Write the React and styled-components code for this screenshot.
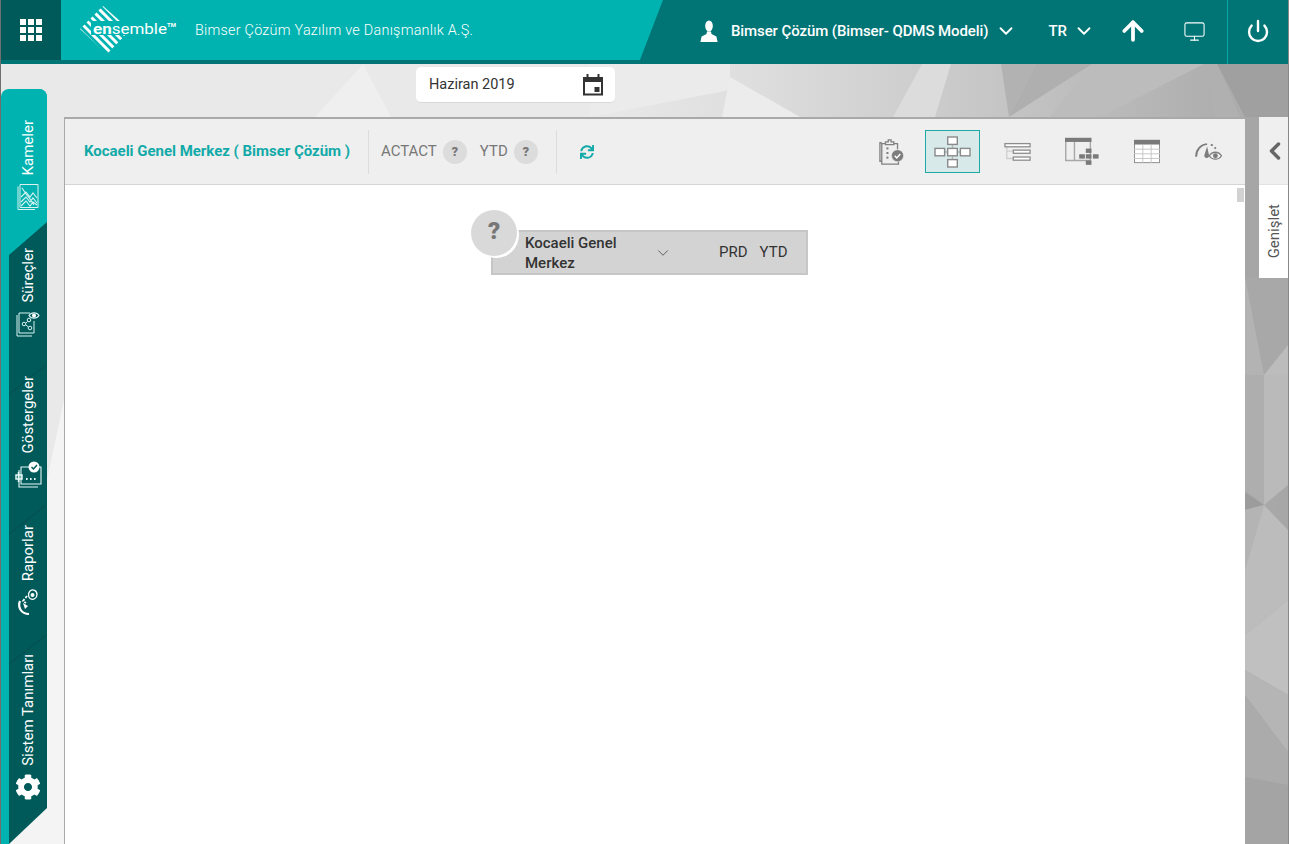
import React from 'react'
import styled, { createGlobalStyle } from 'styled-components'
import { ArrowUp, ChevronDown, ChevronLeft, Monitor, Power } from 'lucide-react'
import { FaCog, FaSync } from 'react-icons/fa'

const TEAL = '#00b3b0'
const DARK_TEAL = '#017575'
const DEEP_TEAL = '#005a5a'

const GlobalStyle = createGlobalStyle`
  html, body {
    margin: 0;
    background: #fff;
    font-family: Roboto, "Liberation Sans", sans-serif;
    overflow: hidden;
  }
`

const Frame = styled.div`
  position: relative;
  box-sizing: border-box;
  width: 1289px;
  height: 844px;
  border-left: 1px solid #6f6f6f;
  border-right: 1px solid #8a8a8a;
  display: flex;
  flex-direction: column;
  overflow: hidden;
`

const Backdrop = styled.svg`
  position: absolute;
  left: -1px;
  top: 0;
  width: 1290px;
  height: 844px;
`

const Header = styled.header`
  position: relative;
  flex: 0 0 64px;
  display: flex;
  background: ${DARK_TEAL};
  color: #fff;
`

const GridButton = styled.div`
  width: 60px;
  height: 60px;
  background: ${DEEP_TEAL};
  display: flex;
  align-items: center;
  justify-content: center;
`

const Brand = styled.div`
  width: 603px;
  height: 60px;
  background: ${TEAL};
  clip-path: polygon(0 0, 100% 0, calc(100% - 23px) 100%, 0 100%);
  display: flex;
  align-items: center;
  padding-left: 19px;
  box-sizing: border-box;
`

const CompanyName = styled.span`
  margin-left: 17px;
  font-size: 14.4px;
  font-weight: 300;
  letter-spacing: 0.25px;
  color: #fff;
  padding-top: 1px;
`

const HeaderRight = styled.div`
  display: flex;
  align-items: center;
  flex: 1;
  padding: 0 0 2px 37px;
  height: 64px;
  box-sizing: border-box;
`

const UserName = styled.span`
  margin-left: 13px;
  font-size: 15px;
  font-weight: 500;
  letter-spacing: -0.09px;
  white-space: nowrap;
`

const Lang = styled.span`
  margin-left: 31px;
  font-size: 15px;
  font-weight: 500;
`

const Glyph = styled.span`
  display: flex;
  margin-left: ${p => p.$left}px;
`

const PowerCell = styled.div`
  margin: 0 0 -2px 21px;
  align-self: stretch;
  width: 61px;
  border-left: 1px solid #0aa5a2;
  display: flex;
  align-items: center;
  justify-content: center;
  padding-bottom: 2px;
  box-sizing: border-box;
`

const Body = styled.div`
  position: relative;
  flex: 1;
  display: flex;
  min-height: 0;
`

const Sidebar = styled.nav`
  flex: 0 0 46px;
  margin-top: 25px;
  box-sizing: border-box;
  padding-left: 8px;
  border-radius: 8px 8px 0 0;
  overflow: hidden;
  background:
    linear-gradient(90deg, ${TEAL} 8px, transparent 8px),
    linear-gradient(${TEAL}, ${TEAL}) no-repeat top / 100% 166px;
`

const Tab = styled.a`
  position: relative;
  box-sizing: border-box;
  height: ${p => p.$height}px;
  padding-top: ${p => p.$top}px;
  display: flex;
  flex-direction: column;
  align-items: center;
  gap: 8px;
  color: #fff;
  background: ${p => (p.$active ? TEAL : DEEP_TEAL)};
  clip-path: ${p => p.$shape || 'none'};

  &::before {
    content: '';
    display: ${p => (p.$seam ? 'block' : 'none')};
    position: absolute;
    left: 0;
    top: 0;
    width: 100%;
    height: 30px;
    background: linear-gradient(to bottom right, transparent calc(50% - 2px), #034d4d 50%, transparent 50%);
  }
`

const TabLabel = styled.span`
  position: relative;
  writing-mode: vertical-rl;
  transform: rotate(180deg);
  font-size: 15px;
  line-height: 16px;
  white-space: nowrap;
`

const Center = styled.div`
  position: relative;
  flex: 0 0 1181px;
  margin-left: 17px;
  display: flex;
  flex-direction: column;
  min-height: 0;
`

const DatePicker = styled.div`
  box-sizing: border-box;
  margin: 3px 0 14px 352px;
  width: 199px;
  height: 36px;
  border-radius: 5px;
  background: #fff;
  border-bottom: 1px solid #d8d8d8;
  padding: 0 11px 0 13px;
  display: flex;
  align-items: center;
  justify-content: space-between;
  font-size: 14.5px;
  color: #333;
`

const Panel = styled.section`
  position: relative;
  flex: 1;
  display: flex;
  flex-direction: column;
  box-sizing: border-box;
  border-top: 2px solid #a9a9a9;
  border-left: 1px solid #a9a9a9;
  background: #fff;
  min-height: 0;
`

const Toolbar = styled.div`
  flex: 0 0 66px;
  box-sizing: border-box;
  display: flex;
  align-items: center;
  background: #efefef;
  border-bottom: 1px solid #d4d4d4;
  padding-left: 19px;
`

const Title = styled.h1`
  margin: 0;
  padding-bottom: 2px;
  font-size: 15px;
  font-weight: 700;
  letter-spacing: -0.02px;
  color: #12aaa8;
  white-space: nowrap;
`

const Divider = styled.span`
  width: 1px;
  height: 44px;
  background: #dcdcdc;
  margin: 0 ${p => p.$right}px 0 ${p => p.$left}px;
`

const Metric = styled.span`
  padding-bottom: 2px;
  font-size: 15px;
  color: #777;
  margin-right: 6px;
`

const HelpDot = styled.span`
  width: 24px;
  height: 24px;
  border-radius: 50%;
  background: #dcdcdc;
  color: #777;
  font-size: 13px;
  font-weight: 900;
  display: flex;
  align-items: center;
  justify-content: center;
  margin-right: ${p => p.$right || 0}px;
`

const Refresh = styled(FaSync)`
  margin-left: 23px;
  width: 14px;
  height: 14px;
  color: #12aaa8;
`

const ViewButtons = styled.div`
  margin-left: auto;
  display: flex;
  align-items: center;
  padding-right: 22px;
`

const ViewButton = styled.button`
  box-sizing: border-box;
  width: ${p => p.$width}px;
  height: 43px;
  margin-left: ${p => p.$gap}px;
  padding: 0;
  display: flex;
  align-items: center;
  justify-content: center;
  background: ${p => (p.$active ? '#d7e9e9' : 'transparent')};
  border: 1px solid ${p => (p.$active ? '#1fa9a5' : 'transparent')};
`

const Canvas = styled.div`
  position: relative;
  flex: 1;
  background: #fff;
`

const ScrollThumb = styled.div`
  position: absolute;
  right: 1px;
  top: 3px;
  width: 7px;
  height: 14px;
  background: #d2d2d2;
`

const Node = styled.div`
  position: absolute;
  left: 426px;
  top: 45px;
  box-sizing: border-box;
  width: 317px;
  height: 45px;
  background: #d3d3d3;
  border: 2px solid #c6c6c6;
  display: flex;
  align-items: center;
  font-size: 15px;
  color: #333;
`

const NodeName = styled.div`
  width: 129px;
  margin-left: 32px;
  font-weight: 500;
  line-height: 20px;
`

const NodeChevron = styled(ChevronDown)`
  color: #555;
`

const NodeTag = styled.span`
  margin-left: ${p => p.$left}px;
  padding-bottom: 2px;
  font-weight: 400;
`

const NodeBadge = styled.div`
  position: absolute;
  left: 406px;
  top: 25px;
  width: 46px;
  height: 46px;
  border-radius: 50%;
  background: #d9d9d9;
  box-shadow: 2px 2px 0 #fff;
  color: #777;
  font-size: 24px;
  font-weight: 900;
  display: flex;
  align-items: center;
  justify-content: center;
  padding-bottom: 4px;
  box-sizing: border-box;
`

const Expander = styled.aside`
  flex: 0 0 29px;
  margin: 53px 0 0 14px;
  height: 161px;
  display: flex;
  flex-direction: column;
`

const ExpandTop = styled.div`
  flex: 0 0 67px;
  background: #efefef;
  display: flex;
  align-items: center;
  justify-content: center;
  padding-left: 2px;
  box-sizing: border-box;
  color: #666;
`

const ExpandLabel = styled.div`
  flex: 1;
  background: #fff;
  border-top: 1px solid #e3e3e3;
  display: flex;
  justify-content: center;
  align-items: center;
`

const ExpandText = styled.span`
  writing-mode: vertical-rl;
  transform: rotate(180deg);
  font-size: 15px;
  line-height: 16px;
  color: #555;
`

const AppsIcon = () => (
  <svg width="22" height="22" viewBox="0 0 22 22" fill="#fff">
    {[0, 8, 16].map(y => [0, 8, 16].map(x => <rect key={`${x}-${y}`} x={x} y={y} width="6" height="6" />))}
  </svg>
)

const stripes = [-48, -40, -32, -24, -16, -8, 0, 8, 16, 24, 32, 40, 48]

const Logo = () => (
  <svg width="98" height="50" viewBox="0 0 98 50">
    <defs>
      <clipPath id="diamond">
        <polygon points="0,24 23,1 50,25 27,49" />
      </clipPath>
    </defs>
    <g clipPath="url(#diamond)" stroke="#fff" strokeWidth="3">
      {stripes.map(o => (
        <line key={o} x1={o - 30} y1={-5} x2={o + 60} y2={85} />
      ))}
    </g>
    <rect x="11" y="16" width="87" height="14" fill={TEAL} />
    <text x="13" y="28.5" fontFamily="Roboto, sans-serif" fontSize="15" fill="#fff" textLength="74" lengthAdjust="spacingAndGlyphs">
      <tspan fontWeight="700">en</tspan>
      <tspan fontWeight="400">semble</tspan>
    </text>
    <text x="87" y="22" fontFamily="Roboto, sans-serif" fontSize="6" fontWeight="700" fill="#fff">TM</text>
  </svg>
)

const UserIcon = () => (
  <svg width="18" height="22" viewBox="0 0 18 22" fill="#fff">
    <ellipse cx="9" cy="6" rx="3.8" ry="5.6" />
    <path d="M7 11.5 L11 11.5 L11.5 14 L16.4 16.5 L17.6 22 L.4 22 L1.6 16.5 L6.5 14 Z" />
  </svg>
)

const CalendarIcon = () => (
  <svg width="22" height="22" viewBox="0 0 22 22" fill="#333">
    <path d="M1 3h20v18.5H1z M3 8v11.5h16V8z" fillRule="evenodd" />
    <rect x="4.5" y="0" width="2" height="4" />
    <rect x="15.5" y="0" width="2" height="4" />
    <rect x="12.5" y="13" width="5" height="5" />
  </svg>
)

const KamelerIcon = () => (
  <svg width="22" height="28" viewBox="0 0 22 28" fill="none" stroke="#d8f3f2" strokeWidth="1">
    <path d="M3 1.5h18v23H3z" />
    <path d="M1 3.5v23h17" />
    <path d="M4 14l5-5 4 5 3-4 4 5M4 19l5-5 4 5 3-4 4 5M4 23l5-5 4 5 3-4 4 3M5 5l4 6 4 5 4 6" strokeWidth="1.1" />
  </svg>
)

const SureclerIcon = () => (
  <svg width="24" height="26" viewBox="0 0 24 26" fill="none" stroke="#d8f3f2" strokeWidth="1">
    <path d="M14 2H3v20h15v-12" />
    <path d="M1 4v21h15" />
    <circle cx="8" cy="13" r="1.8" />
    <circle cx="13" cy="9" r="1.8" />
    <circle cx="14" cy="17" r="1.8" />
    <path d="M10 12l1.6-1.6M10 14l2.4 2" />
    <path d="M13 4.5c2-3.5 8-3.5 10 0c-2 3.5-8 3.5-10 0z" fill={DEEP_TEAL} strokeWidth="1.2" />
    <circle cx="18" cy="4.5" r="2" fill="#fff" stroke="none" />
  </svg>
)

const GostergeIcon = () => (
  <svg width="27" height="27" viewBox="0 0 27 27" fill="none" stroke="#e6f7f6" strokeWidth="1.1">
    <path d="M6 6h20v17H6z" />
    <path d="M4 9v17h19" />
    <circle cx="19" cy="6" r="5.5" fill="#fff" stroke="none" />
    <path d="M16.5 6l2 2 3.5-4" stroke={DEEP_TEAL} strokeWidth="1.5" />
    <path d="M11 18h1.6M15 18h1.6M19 18h1.6" strokeWidth="1.8" />
    <path d="M1 14h6v4H1zM3.5 11v10" strokeWidth="1.5" />
  </svg>
)

const RaporIcon = () => (
  <svg width="20" height="27" viewBox="0 0 20 27" fill="none" stroke="#fff">
    <path d="M12 2c3-2.5 7-.5 7 3.5s-4 6-7 4c-2-1.5-2-5.5 0-7.5z" strokeWidth="1.3" />
    <circle cx="14.5" cy="6" r="2" fill="#fff" stroke="none" />
    <path d="M9 7l-4 5 3 2" strokeWidth="1.8" strokeDasharray="2.5 1.5" />
    <path d="M2 12c-2.5 6 1 13 9 13" strokeWidth="2.2" />
    <path d="M5 14l5 3-3 3z" fill="#fff" stroke="none" />
  </svg>
)

const ClipboardIcon = () => (
  <svg width="27" height="28" viewBox="0 0 27 28" fill="none" stroke="#808080" strokeWidth="1.4">
    <path d="M3 4H1v20h2" />
    <path d="M7 27h14v-7M20 11V5H3v22h5" />
    <path d="M7 6V3h3V1h3v2h3v3z" fill="#efefef" />
    <rect x="8" y="9" width="2.2" height="2.2" fill="#808080" stroke="none" />
    <rect x="8" y="14" width="2.2" height="2.2" fill="#808080" stroke="none" />
    <rect x="8" y="19" width="2.2" height="2.2" fill="#808080" stroke="none" />
    <circle cx="20" cy="18" r="6.5" fill="#7c7c7c" stroke="#efefef" strokeWidth="0.6" />
    <path d="M17 18l2.2 2.4 3.8-4.2" stroke="#fff" strokeWidth="1.6" />
  </svg>
)

const TreeIcon = () => (
  <svg width="37" height="32" viewBox="0 0 37 32" fill="#fff" stroke="#8a8a8a" strokeWidth="1.4">
    <path d="M18.5 8v16M10 16h17" stroke="#b5b5b5" />
    <rect x="13.7" y="1" width="9.6" height="7.4" />
    <rect x="1" y="12.4" width="9.6" height="7.4" />
    <rect x="13.7" y="12.4" width="9.6" height="7.4" />
    <rect x="26.4" y="12.4" width="9.6" height="7.4" />
    <rect x="13.7" y="23.6" width="9.6" height="7.4" />
  </svg>
)

const ListIcon = () => (
  <svg width="29" height="20" viewBox="0 0 29 20" fill="#fff" stroke="#8e8e8e" strokeWidth="1.4">
    <path d="M3 4v13h9M3 9h9" stroke="#cfcfcf" fill="none" />
    <rect x="1" y="1" width="27" height="3.4" />
    <rect x="10" y="8" width="18" height="3.4" />
    <rect x="10" y="15.4" width="18" height="3.4" />
  </svg>
)

const TableTreeIcon = () => (
  <svg width="37" height="29" viewBox="0 0 37 29" fill="#7a7a7a">
    <path d="M.8 1h26v23H.8zM10 4.5V24" fill="none" stroke="#a8a8a8" strokeWidth="1.5" />
    <rect x="0" y="0" width="28" height="4.4" />
    <rect x="22" y="11.4" width="6" height="4.6" />
    <rect x="15" y="17.4" width="6" height="4.6" />
    <rect x="22" y="17.4" width="6" height="4.6" />
    <rect x="29.5" y="17.4" width="6" height="4.6" />
    <rect x="22" y="24" width="6" height="4.6" />
  </svg>
)

const TableIcon = () => (
  <svg width="28" height="25" viewBox="0 0 28 25" fill="#fff" stroke="#8a8a8a" strokeWidth="1">
    <rect x=".5" y=".5" width="27" height="24" />
    <rect x="0" y="0" width="28" height="5" fill="#7a7a7a" stroke="none" />
    <path d="M0 10h28M0 15h28M0 20h28M9.5 5v20M18.5 5v20" stroke="#c4c4c4" />
  </svg>
)

const GaugeIcon = () => (
  <svg width="29" height="20" viewBox="0 0 29 20" fill="none" stroke="#7c7c7c">
    <path d="M1.2 15C1 8 6 2 13 1.5" strokeWidth="2" />
    <path d="M17 2l2.2 1M21 5l1.4 1.4" strokeWidth="2" />
    <path d="M13 4l2 9a2.6 2.6 0 1 1-5 .4z" fill="#7c7c7c" stroke="none" />
    <path d="M15.4 14c3-5 10-5 13 0c-3 5-10 5-13 0z" fill="#efefef" strokeWidth="1.4" />
    <circle cx="21.9" cy="14" r="2.6" fill="#7c7c7c" stroke="none" />
  </svg>
)

const Background = () => (
  <Backdrop viewBox="0 0 1290 844">
    <defs>
      <linearGradient id="wash" x1="0" x2="1" y1="0" y2="0">
        <stop offset="0" stopColor="#e9e9e9" />
        <stop offset="0.46" stopColor="#e9e9e9" />
        <stop offset="0.58" stopColor="#dedede" />
        <stop offset="0.7" stopColor="#cfcfcf" />
        <stop offset="0.86" stopColor="#bababa" />
        <stop offset="1" stopColor="#a6a6a6" />
      </linearGradient>
    </defs>
    <rect width="1290" height="844" fill="url(#wash)" />
    <polygon points="363,64 315,117 391,117" fill="#efefef" />
    <polygon points="590,64 730,64 730,90 590,117" fill="#ebebeb" />
    <polygon points="730,77 722,117 800,117" fill="#ececec" />
    <polygon points="922,64 951,64 935,117 893,117" fill="#dcdcdc" />
    <polygon points="1001,64 1036,64 1009,117" fill="#b2b2b2" />
    <polygon points="1036,64 1092,64 1009,117" fill="#afafaf" />
    <polygon points="1092,64 1204,64 1100,117 1050,117" fill="#bcbcbc" />
    <polygon points="1204,64 1217,64 1240,117 1215,117" fill="#b0b0b0" />
    <polygon points="1217,64 1290,64 1290,117 1245,117" fill="#a0a0a0" />
    <polygon points="47,480 64,400 64,844 0,844 0,830" fill="#f4f4f4" />
    <polygon points="1245,117 1290,117 1290,277 1245,277" fill="#a6a6a6" />
    <polygon points="1245,277 1288,277 1288,345 1264,375" fill="#a8a8a8" />
    <polygon points="1245,277 1264,375 1245,375" fill="#b3b3b3" />
    <polygon points="1264,375 1288,345 1288,375" fill="#bcbcbc" />
    <polygon points="1245,375 1264,375 1264,505 1245,490" fill="#aeaeae" />
    <polygon points="1264,375 1288,375 1288,485 1264,505" fill="#bababa" />
    <polygon points="1245,492 1264,505 1245,510" fill="#9c9c9c" />
    <polygon points="1245,510 1264,505 1245,570" fill="#b4b4b4" />
    <polygon points="1245,570 1264,505 1288,530 1288,600 1245,635" fill="#bcbcbc" />
    <polygon points="1245,635 1288,600 1288,695 1245,670" fill="#c0c0c0" />
    <polygon points="1245,670 1288,695 1288,752 1245,695" fill="#b5b5b5" />
    <polygon points="1245,695 1288,752 1288,785 1245,777" fill="#ababab" />
    <polygon points="1245,777 1288,785 1288,844 1245,844" fill="#a4a4a4" />
  </Backdrop>
)

export default function App() {
  return (
    <>
      <GlobalStyle />
      <Frame>
        <Background />
        <Header>
          <GridButton><AppsIcon /></GridButton>
          <Brand>
            <Logo />
            <CompanyName>Bimser Çözüm Yazılım ve Danışmanlık A.Ş.</CompanyName>
          </Brand>
          <HeaderRight>
            <UserIcon />
            <UserName>Bimser Çözüm (Bimser- QDMS Modeli)</UserName>
            <Glyph $left={7}><ChevronDown size={22} strokeWidth={2} /></Glyph>
            <Lang>TR</Lang>
            <Glyph $left={6}><ChevronDown size={22} strokeWidth={2} /></Glyph>
            <Glyph $left={23}><ArrowUp size={30} strokeWidth={3} /></Glyph>
            <Glyph $left={35}><Monitor size={23} strokeWidth={1.1} /></Glyph>
            <PowerCell><Power size={24} strokeWidth={2.4} /></PowerCell>
          </HeaderRight>
        </Header>
        <Body>
          <Sidebar>
            <Tab $active $height={133} $top={31}>
              <TabLabel>Kameler</TabLabel>
              <KamelerIcon />
            </Tab>
            <Tab $height={143} $top={26} $shape="polygon(0 33px, 100% 0, 100% 100%, 0 100%)">
              <TabLabel>Süreçler</TabLabel>
              <SureclerIcon />
            </Tab>
            <Tab $seam $height={140} $top={11}>
              <TabLabel>Göstergeler</TabLabel>
              <GostergeIcon />
            </Tab>
            <Tab $seam $height={130} $top={20}>
              <TabLabel>Raporlar</TabLabel>
              <RaporIcon />
            </Tab>
            <Tab $seam $height={209} $top={19} $shape="polygon(0 0, 100% 0, 100% calc(100% - 36px), 0 100%)">
              <TabLabel>Sistem Tanımları</TabLabel>
              <FaCog size={26} />
            </Tab>
          </Sidebar>
          <Center>
            <DatePicker>
              Haziran 2019
              <CalendarIcon />
            </DatePicker>
            <Panel>
              <Toolbar>
                <Title>Kocaeli Genel Merkez ( Bimser Çözüm )</Title>
                <Divider $left={18} $right={12} />
                <Metric>ACTACT</Metric>
                <HelpDot $right={13}>?</HelpDot>
                <Metric>YTD</Metric>
                <HelpDot>?</HelpDot>
                <Divider $left={18} $right={0} />
                <Refresh />
                <ViewButtons>
                  <ViewButton $width={27} $gap={0}><ClipboardIcon /></ViewButton>
                  <ViewButton $active $width={55} $gap={20}><TreeIcon /></ViewButton>
                  <ViewButton $width={29} $gap={23}><ListIcon /></ViewButton>
                  <ViewButton $width={37} $gap={32}><TableTreeIcon /></ViewButton>
                  <ViewButton $width={28} $gap={32}><TableIcon /></ViewButton>
                  <ViewButton $width={29} $gap={33}><GaugeIcon /></ViewButton>
                </ViewButtons>
              </Toolbar>
              <Canvas>
                <ScrollThumb />
                <Node>
                  <NodeName>Kocaeli Genel Merkez</NodeName>
                  <NodeChevron size={18} strokeWidth={1.2} />
                  <NodeTag $left={47}>PRD</NodeTag>
                  <NodeTag $left={12}>YTD</NodeTag>
                </Node>
                <NodeBadge>?</NodeBadge>
              </Canvas>
            </Panel>
          </Center>
          <Expander>
            <ExpandTop><ChevronLeft size={28} strokeWidth={3} /></ExpandTop>
            <ExpandLabel><ExpandText>Genişlet</ExpandText></ExpandLabel>
          </Expander>
        </Body>
      </Frame>
    </>
  )
}
